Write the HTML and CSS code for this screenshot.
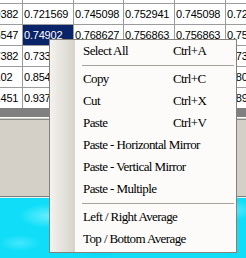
FILE: index.html
```html
<!DOCTYPE html>
<html lang="en">
	<head>
		<meta charset="UTF-8" />
		<title>Grid menu</title>
		<link rel="stylesheet" href="styles.css">
	</head>
	<body>
		<div class="sheet">
			<div class="grid">
				<div class="cell">0.705882</div><div class="cell">0.717647</div><div class="cell">0.741176</div><div class="cell">0.749020</div><div class="cell">0.741176</div><div class="cell">0.717647</div>
				<div class="cell">0.709382</div><div class="cell">0.721569</div><div class="cell">0.745098</div><div class="cell">0.752941</div><div class="cell">0.745098</div><div class="cell">0.721569</div>
				<div class="cell">0.725547</div><div class="cell selected">0.74902</div><div class="cell">0.768627</div><div class="cell">0.756863</div><div class="cell">0.756863</div><div class="cell">0.756863</div>
				<div class="cell">0.717382</div><div class="cell">0.733333</div><div class="cell">0.760784</div><div class="cell">0.772549</div><div class="cell">0.768627</div><div class="cell">0.733333</div>
				<div class="cell">0.85102</div><div class="cell">0.854902</div><div class="cell">0.862745</div><div class="cell">0.843137</div><div class="cell">0.827451</div><div class="cell">0.803922</div>
				<div class="cell">0.921451</div><div class="cell">0.937255</div><div class="cell">0.925490</div><div class="cell">0.913725</div><div class="cell">0.901961</div><div class="cell">0.890196</div>
			</div>
		</div>
		<div class="split"></div>
		<div class="panel"></div>
		<div class="water"></div>

		<!-- context menu -->
		<ul class="menu">
			<li class="item"><span>Select All</span><span>Ctrl+A</span></li>
			<li class="sep"></li>
			<li class="item"><span>Copy</span><span>Ctrl+C</span></li>
			<li class="item"><span>Cut</span><span>Ctrl+X</span></li>
			<li class="item"><span>Paste</span><span>Ctrl+V</span></li>
			<li class="item"><span>Paste - Horizontal Mirror</span></li>
			<li class="item"><span>Paste - Vertical Mirror</span></li>
			<li class="item"><span>Paste - Multiple</span></li>
			<li class="sep"></li>
			<li class="item"><span>Left / Right Average</span></li>
			<li class="item"><span>Top / Bottom Average</span></li>
		</ul>
	</body>
</html>
```
FILE: styles.css
```css
* {
	margin: 0;
	padding: 0;
}
html, body {
	width: 100%;
	height: 100%;
}
body {
	display: flex;
	flex-direction: column;
	overflow: hidden;
	background-color: #d4d0c8;
}
.sheet {
	flex: none;
	height: 117px;
	overflow: hidden;
	background-color: #808080;
}
.grid {
	display: grid;
	grid-template-columns: 49px 50px 49px 50px 50px 50px;
	grid-auto-rows: 20px;
	gap: 1px;
	width: max-content;
	margin: -17px 0 0 -27px;
	background-color: #9c9c9c;
}
.cell {
	background-color: #fff;
	padding-left: 1px;
	font-family: "Liberation Sans", Arial, sans-serif;
	font-size: 11px;
	letter-spacing: -0.2px;
	line-height: 20px;
	white-space: nowrap;
	overflow: hidden;
	color: #000;
}
.cell.selected {
	background-color: #0a246a;
	color: #fff;
}
.split {
	flex: none;
	height: 1px;
	background-color: #d4d0c8;
	border-top: 1px solid #fff;
	border-bottom: 1px solid #8c8c8c;
}
.panel {
	flex: none;
	height: 76px;
	background-color: #d4d0c8;
	border-bottom: 1px solid #808080;
}
.water {
	flex: 1;
	border-top: 1px solid #e6eef0;
	background-color: #10def9;
	background-image:
		radial-gradient(ellipse 30px 12px at 20% 30%, rgba(140, 245, 255, 0.7), transparent),
		radial-gradient(ellipse 40px 14px at 70% 60%, rgba(120, 240, 255, 0.6), transparent),
		radial-gradient(ellipse 24px 10px at 40% 85%, rgba(0, 200, 240, 0.6), transparent),
		radial-gradient(ellipse 30px 10px at 92% 20%, rgba(150, 248, 255, 0.6), transparent),
		radial-gradient(ellipse 20px 8px at 8% 75%, rgba(90, 235, 255, 0.7), transparent);
}

/* context menu */
.menu {
	position: absolute;
	left: 49px;
	top: 39px;
	width: 188px;
	box-sizing: border-box;
	padding-bottom: 2px;
	list-style: none;
	border: 1px solid #84817b;
	background: linear-gradient(to right, #f4f2ee, #d7d3cb 25px, #fcfbf9 25px);
	font-family: "Liberation Serif", "Times New Roman", serif;
	font-size: 13px;
	letter-spacing: -0.6px;
	color: #000;
}
.item {
	display: grid;
	grid-template-columns: 90px auto;
	align-items: center;
	height: 22px;
	padding-left: 33px;
	white-space: nowrap;
}
.sep {
	height: 0;
	margin: 3px 2px 2px 32px;
	border-top: 1px solid #a6a39d;
}
```
